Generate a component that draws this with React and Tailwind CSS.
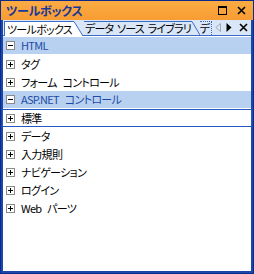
import React from 'react';

const groups = [
  { title: 'HTML', items: ['タグ', 'フォーム コントロール'] },
  {
    title: 'ASP.NET コントロール',
    items: ['標準', 'データ', '入力規則', 'ナビゲーション', 'ログイン', 'Web パーツ'],
  },
];

const Box = ({ open }) => (
  <svg width="9" height="9" viewBox="0 0 9 9" className="shrink-0">
    <rect x="0.5" y="0.5" width="8" height="8" fill="white" stroke="#8a8a8a" />
    <path d="M2 4.5h5" stroke="black" />
    {!open && <path d="M4.5 2v5" stroke="black" />}
  </svg>
);

const Header = ({ title }) => (
  <div className="h-[18px] flex items-center gap-[6px] pl-[3px] bg-[#b9d1f0] text-[#1c4aa6] border-b border-white">
    <Box open />
    <span>{title}</span>
  </div>
);

const Item = ({ label, selected }) => (
  <div
    className={
      'h-[18px] flex items-center gap-[6px] pl-[3px] ' +
      (selected ? 'border border-[#2458c4] -ml-[1px] mr-[-1px] pl-[2px]' : '')
    }
  >
    <Box />
    <span>{label}</span>
  </div>
);

export default function App() {
  return (
    <div className="w-[254px] h-[274px] flex flex-col bg-white border border-[#0a2b8c] font-['Noto_Sans_CJK_JP',sans-serif] text-[11px] tracking-[-0.7px] [word-spacing:4px] leading-none text-black whitespace-nowrap [font-feature-settings:'palt']">
      {/* title bar */}
      <div className="h-[19px] flex items-center px-[5px] bg-gradient-to-b from-[#fbab44] to-[#f89c32]">
        <span className="font-bold text-[12px] text-[#17389a] tracking-[-0.3px]">ツールボックス</span>
        <div className="ml-auto flex items-center gap-[10px] pr-[2px]">
          <div className="w-[9px] h-[9px] border border-black border-t-2" />
          <svg width="9" height="9" viewBox="0 0 9 9">
            <path d="M1 1l7 7M8 1l-7 7" stroke="black" strokeWidth="1.6" />
          </svg>
        </div>
      </div>

      <div className="flex-1 flex flex-col border-x-2 border-b-2 border-[#1a47aa]">
        {/* tab strip */}
        <div className="h-[16px] flex items-end bg-[#d8e6f8] border-b border-[#3a6cc6]">
          <div className="h-[15px] w-[70px] flex items-center pl-[2px] bg-white border-l border-t border-[#3a6cc6] -mb-px ml-[1px]">
            ツールボックス
          </div>
          <svg width="10" height="15" className="-mb-px shrink-0">
            <path d="M0 0L9 15H0z" fill="white" />
            <path d="M0 0.5L9 15" stroke="#3a6cc6" />
          </svg>
          <div className="h-[14px] flex items-center pl-[1px] pr-[1px] border-t border-[#3a6cc6] [word-spacing:2px] tracking-[-0.8px]">
            データ ソース ライブラリ
          </div>
          <svg width="8" height="14" className="shrink-0">
            <path d="M0 0.5L8 14" stroke="#3a6cc6" />
          </svg>
          <div className="h-[14px] w-[12px] shrink-0 overflow-hidden flex items-center border-t border-[#3a6cc6] border-r border-dotted">
            デ
          </div>
          <div className="ml-auto h-[16px] flex items-center gap-[5px] pr-[3px]">
            <svg width="6" height="9" viewBox="0 0 6 9">
              <path d="M5.5 0.5L0.8 4.5L5.5 8.5z" fill="none" stroke="#a0a8b8" />
            </svg>
            <svg width="6" height="9" viewBox="0 0 6 9">
              <path d="M0.5 0L5.5 4.5L0.5 9z" fill="black" />
            </svg>
            <svg width="9" height="9" viewBox="0 0 9 9" className="ml-[2px]">
              <path d="M1 1l7 7M8 1l-7 7" stroke="black" strokeWidth="1.6" />
            </svg>
          </div>
        </div>

        {/* list */}
        <div className="flex flex-col pt-px">
          {groups.map((g) => (
            <React.Fragment key={g.title}>
              <Header title={g.title} />
              {g.items.map((it) => (
                <Item key={it} label={it} selected={it === '標準'} />
              ))}
            </React.Fragment>
          ))}
        </div>
      </div>
    </div>
  );
}
